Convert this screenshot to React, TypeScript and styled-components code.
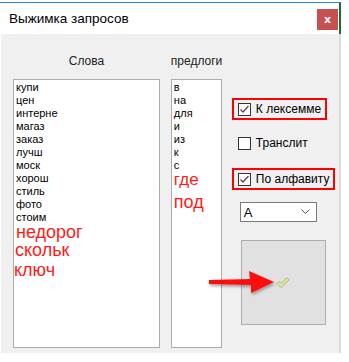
import styled, { createGlobalStyle } from "styled-components";

const GlobalStyle = createGlobalStyle`
  html, body {
    margin: 0;
    padding: 0;
    background: #ffffff;
  }
  body {
    font-family: "Liberation Sans", Arial, sans-serif;
  }
`;

const Window = styled.div`
  width: 341px;
  margin-top: 2px;
`;

const TitleBar = styled.div`
  display: flex;
  align-items: center;
  justify-content: space-between;
  height: 31px;
  border-top: 1px solid #2b8ad8;
  border-right: 2px solid #1e6b3a;
  background: #ffffff;
  padding: 0 1px 0 9px;
`;

const Title = styled.div`
  font-size: 13.5px;
  color: #000000;
  margin-top: -1px;
`;

const CloseButton = styled.div`
  display: flex;
  align-items: center;
  justify-content: center;
  width: 21px;
  height: 21px;
  background: #c75050;
  color: #ffffff;
  font-size: 11px;
  font-weight: 700;
  font-family: "DejaVu Sans", sans-serif;
  margin-top: 1px;
`;

const Body = styled.div`
  position: relative;
  display: flex;
  height: 319px;
  margin-left: 1px;
  background: #f0f0f0;
  border-right: 2px solid #dcdcdc;
  padding-left: 12px;
  box-sizing: border-box;
`;

const Column = styled.div<{ $width: number; $ml?: number }>`
  display: flex;
  flex-direction: column;
  width: ${(p) => p.$width}px;
  margin-left: ${(p) => p.$ml ?? 0}px;
`;

const Caption = styled.div`
  height: 15px;
  margin-top: 20px;
  margin-bottom: 10px;
  text-align: center;
  font-size: 12px;
  color: #222222;
`;

const ListBox = styled.div`
  height: 269px;
  background: #ffffff;
  border: 1px solid #acacae;
  padding: 1px 0 0 2px;
  box-sizing: border-box;
  overflow: hidden;
`;

const Item = styled.div`
  font-size: 11px;
  line-height: 13px;
  height: 13px;
  color: #000000;
  white-space: nowrap;
`;

const Note = styled.div<{ $size: number; $lh: number; $ml?: number }>`
  font-size: ${(p) => p.$size}px;
  line-height: ${(p) => p.$lh}px;
  height: ${(p) => p.$lh}px;
  margin-left: ${(p) => p.$ml ?? 0}px;
  color: #ff1a1a;
  white-space: nowrap;
`;

const Option = styled.div<{ $marked?: boolean; $mt: number }>`
  display: inline-flex;
  align-items: center;
  align-self: flex-start;
  gap: 5px;
  height: 22px;
  margin-top: ${(p) => p.$mt}px;
  padding: 0 4px;
  border: 2px solid ${(p) => (p.$marked ? "#ff0000" : "transparent")};
  box-sizing: border-box;
  font-size: 12px;
  color: #000000;
  white-space: nowrap;
`;

const Box = styled.div`
  width: 13px;
  height: 13px;
  border: 1px solid #333333;
  background: #ffffff;
  box-sizing: border-box;
  display: flex;
  align-items: center;
  justify-content: center;
`;

const Select = styled.div`
  display: flex;
  align-items: center;
  justify-content: space-between;
  width: 77px;
  height: 20px;
  margin: 12px 0 0 8px;
  padding: 0 6px 0 3px;
  border: 1px solid #7a7a7a;
  background: #ffffff;
  box-sizing: border-box;
  font-size: 13px;
  color: #000000;
`;

const Preview = styled.div`
  display: flex;
  align-items: center;
  justify-content: center;
  width: 85px;
  height: 85px;
  margin: 18px 0 0 9px;
  background: #e1e1e1;
  border: 1px solid #adadad;
  box-sizing: border-box;
`;

const Arrow = styled.svg`
  position: absolute;
  left: 204px;
  top: 230px;
`;

const Check = () => (
  <svg width="11" height="11" viewBox="0 0 11 11">
    <path d="M1.5 5.5 L4 8 L9.5 2" fill="none" stroke="#6b3a5e" strokeWidth="1.3" />
  </svg>
);

const CheckOption = ({ label, checked, marked, mt }: { label: string; checked?: boolean; marked?: boolean; mt: number }) => (
  <Option $marked={marked} $mt={mt}>
    <Box>{checked && <Check />}</Box>
    {label}
  </Option>
);

const words = ["купи", "цен", "интерне", "магаз", "заказ", "лучш", "моск", "хорош", "стиль", "фото", "стоим"];
const preps = ["в", "на", "для", "и", "из", "к", "с"];

export default function App() {
  return (
    <>
      <GlobalStyle />
      <Window>
        <TitleBar>
          <Title>Выжимка запросов</Title>
          <CloseButton>x</CloseButton>
        </TitleBar>
        <Body>
          <Column $width={148}>
            <Caption>Слова</Caption>
            <ListBox>
              {words.map((w) => (
                <Item key={w}>{w}</Item>
              ))}
              <Note $size={18} $lh={16}>недорог</Note>
              <Note $size={18} $lh={20} $ml={-1}>скольк</Note>
              <Note $size={18} $lh={21} $ml={-2}>ключ</Note>
            </ListBox>
          </Column>
          <Column $width={51} $ml={11}>
            <Caption>предлоги</Caption>
            <ListBox>
              {preps.map((w) => (
                <Item key={w}>{w}</Item>
              ))}
              <Note $size={17} $lh={16}>где</Note>
              <Note $size={18} $lh={28}>под</Note>
            </ListBox>
          </Column>
          <Column $width={108} $ml={10}>
            <CheckOption label="К лексемме" checked marked mt={64} />
            <CheckOption label="Транслит" mt={12} />
            <CheckOption label="По алфавиту" checked marked mt={14} />
            <Select>
              <span>A</span>
              <svg width="9" height="6" viewBox="0 0 9 6">
                <path d="M0.5 0.5 L4.5 4.5 L8.5 0.5" fill="none" stroke="#555555" strokeWidth="1" />
              </svg>
            </Select>
            <Preview>
              <svg width="14" height="12" viewBox="0 0 14 12">
                <path
                  d="M1 6.5 L3 4.5 L5 6.5 L11 0.8 L13 2.8 L5 10.5 Z"
                  fill="#dfe8a8"
                  stroke="#a9bb5c"
                  strokeWidth="1"
                  strokeLinejoin="round"
                />
              </svg>
            </Preview>
          </Column>
          <Arrow width="74" height="34" viewBox="0 0 74 34">
            <defs>
              <filter id="shadow" x="-10%" y="-20%" width="130%" height="160%">
                <feDropShadow dx="1" dy="2" stdDeviation="1.5" floodColor="#000000" floodOpacity="0.35" />
              </filter>
            </defs>
            <path
              d="M4 16 L45 15 L44 7 L69 18 L46 29 L46 21 L4 20 Z"
              fill="#ff0d0d"
              filter="url(#shadow)"
            />
          </Arrow>
        </Body>
      </Window>
    </>
  );
}
